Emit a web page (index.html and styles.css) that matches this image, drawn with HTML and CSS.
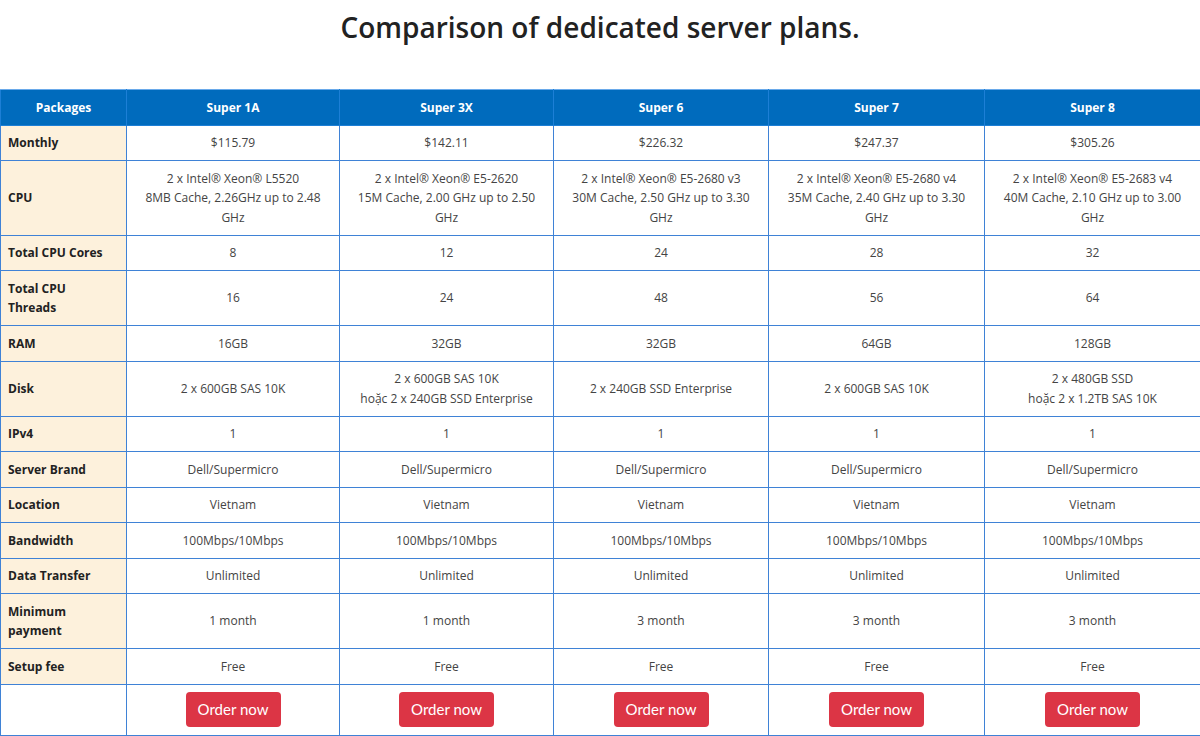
FILE: index.html
```html
<!DOCTYPE html>
<html lang="en">
<head>
<meta charset="utf-8">
<title>Comparison of dedicated server plans</title>
<link rel="stylesheet" href="styles.css">
</head>
<body>
<h1 class="title">Comparison of dedicated server plans.</h1>
<div class="table-wrap">
<table class="plans">
<colgroup>
<col class="c-label"><col class="c-1"><col class="c-2"><col class="c-3"><col class="c-4"><col class="c-5">
</colgroup>
<thead>
<tr><th>Packages</th><th>Super 1A</th><th>Super 3X</th><th>Super 6</th><th>Super 7</th><th>Super 8</th></tr>
</thead>
<tbody>
<tr><th>Monthly</th><td>$115.79</td><td>$142.11</td><td>$226.32</td><td>$247.37</td><td>$305.26</td></tr>
<tr><th>CPU</th>
<td>2 x Intel® Xeon® L5520<br>8MB Cache, 2.26GHz up to 2.48<br>GHz</td>
<td>2 x Intel® Xeon® E5-2620<br>15M Cache, 2.00 GHz up to 2.50<br>GHz</td>
<td>2 x Intel® Xeon® E5-2680 v3<br>30M Cache, 2.50 GHz up to 3.30<br>GHz</td>
<td>2 x Intel® Xeon® E5-2680 v4<br>35M Cache, 2.40 GHz up to 3.30<br>GHz</td>
<td>2 x Intel® Xeon® E5-2683 v4<br>40M Cache, 2.10 GHz up to 3.00<br>GHz</td></tr>
<tr><th>Total CPU Cores</th><td>8</td><td>12</td><td>24</td><td>28</td><td>32</td></tr>
<tr><th>Total CPU<br>Threads</th><td>16</td><td>24</td><td>48</td><td>56</td><td>64</td></tr>
<tr><th>RAM</th><td>16GB</td><td>32GB</td><td>32GB</td><td>64GB</td><td>128GB</td></tr>
<tr><th>Disk</th><td>2 x 600GB SAS 10K</td><td>2 x 600GB SAS 10K<br>hoặc 2 x 240GB SSD Enterprise</td><td>2 x 240GB SSD Enterprise</td><td>2 x 600GB SAS 10K</td><td>2 x 480GB SSD<br>hoặc 2 x 1.2TB SAS 10K</td></tr>
<tr><th>IPv4</th><td>1</td><td>1</td><td>1</td><td>1</td><td>1</td></tr>
<tr><th>Server Brand</th><td>Dell/Supermicro</td><td>Dell/Supermicro</td><td>Dell/Supermicro</td><td>Dell/Supermicro</td><td>Dell/Supermicro</td></tr>
<tr><th>Location</th><td>Vietnam</td><td>Vietnam</td><td>Vietnam</td><td>Vietnam</td><td>Vietnam</td></tr>
<tr><th>Bandwidth</th><td>100Mbps/10Mbps</td><td>100Mbps/10Mbps</td><td>100Mbps/10Mbps</td><td>100Mbps/10Mbps</td><td>100Mbps/10Mbps</td></tr>
<tr><th>Data Transfer</th><td>Unlimited</td><td>Unlimited</td><td>Unlimited</td><td>Unlimited</td><td>Unlimited</td></tr>
<tr><th>Minimum<br>payment</th><td>1 month</td><td>1 month</td><td>3 month</td><td>3 month</td><td>3 month</td></tr>
<tr><th>Setup fee</th><td>Free</td><td>Free</td><td>Free</td><td>Free</td><td>Free</td></tr>
<tr class="order-row"><td class="blank"></td>
<td><a class="btn-order" href="#">Order now</a></td>
<td><a class="btn-order" href="#">Order now</a></td>
<td><a class="btn-order" href="#">Order now</a></td>
<td><a class="btn-order" href="#">Order now</a></td>
<td><a class="btn-order" href="#">Order now</a></td></tr>
</tbody>
</table>
</div>
</body>
</html>
```
FILE: styles.css
```css
html, body {
  margin: 0;
  padding: 0;
  background: #ffffff;
}
body {
  font-family: "Open Sans", "Noto Sans", sans-serif;
  color: #444;
}
.title {
  margin: 0;
  padding: 10px 0 0;
  font-size: 28px;
  line-height: 34px;
  font-weight: 600;
  color: #222;
  text-align: center;
}
.table-wrap {
  margin-top: 45px;
}
.plans {
  width: 1200px;
  border-collapse: collapse;
  table-layout: fixed;
  font-size: 12px;
  line-height: 19.5px;
}
.c-label { width: 126px; }
.c-1 { width: 213px; }
.c-2 { width: 214px; }
.c-3 { width: 215px; }
.c-4 { width: 216px; }
.c-5 { width: 216px; }
.plans th, .plans td {
  border: 1px solid #3f82d6;
  padding: 7.5px 8px;
  text-align: center;
  vertical-align: middle;
}
.plans thead th {
  background: #006bbd;
  color: #fff;
  font-weight: 700;
  border-color: #1d7fd6;
  border-top-color: #6aaaea;
}
.plans tbody th {
  background: #fdf1dc;
  color: #222;
  font-weight: 700;
  text-align: left;
  padding-left: 7px;
}
.plans td.blank {
  background: #fff;
}
.order-row td {
  padding: 7.5px 8px;
}
.btn-order {
  display: inline-block;
  box-sizing: border-box;
  width: 95px;
  height: 35px;
  line-height: 35px;
  background: #dc3545;
  color: #fff;
  border-radius: 4px;
  font-family: Lato, "Open Sans", sans-serif;
  font-size: 15px;
  text-decoration: none;
  vertical-align: middle;
}
```
